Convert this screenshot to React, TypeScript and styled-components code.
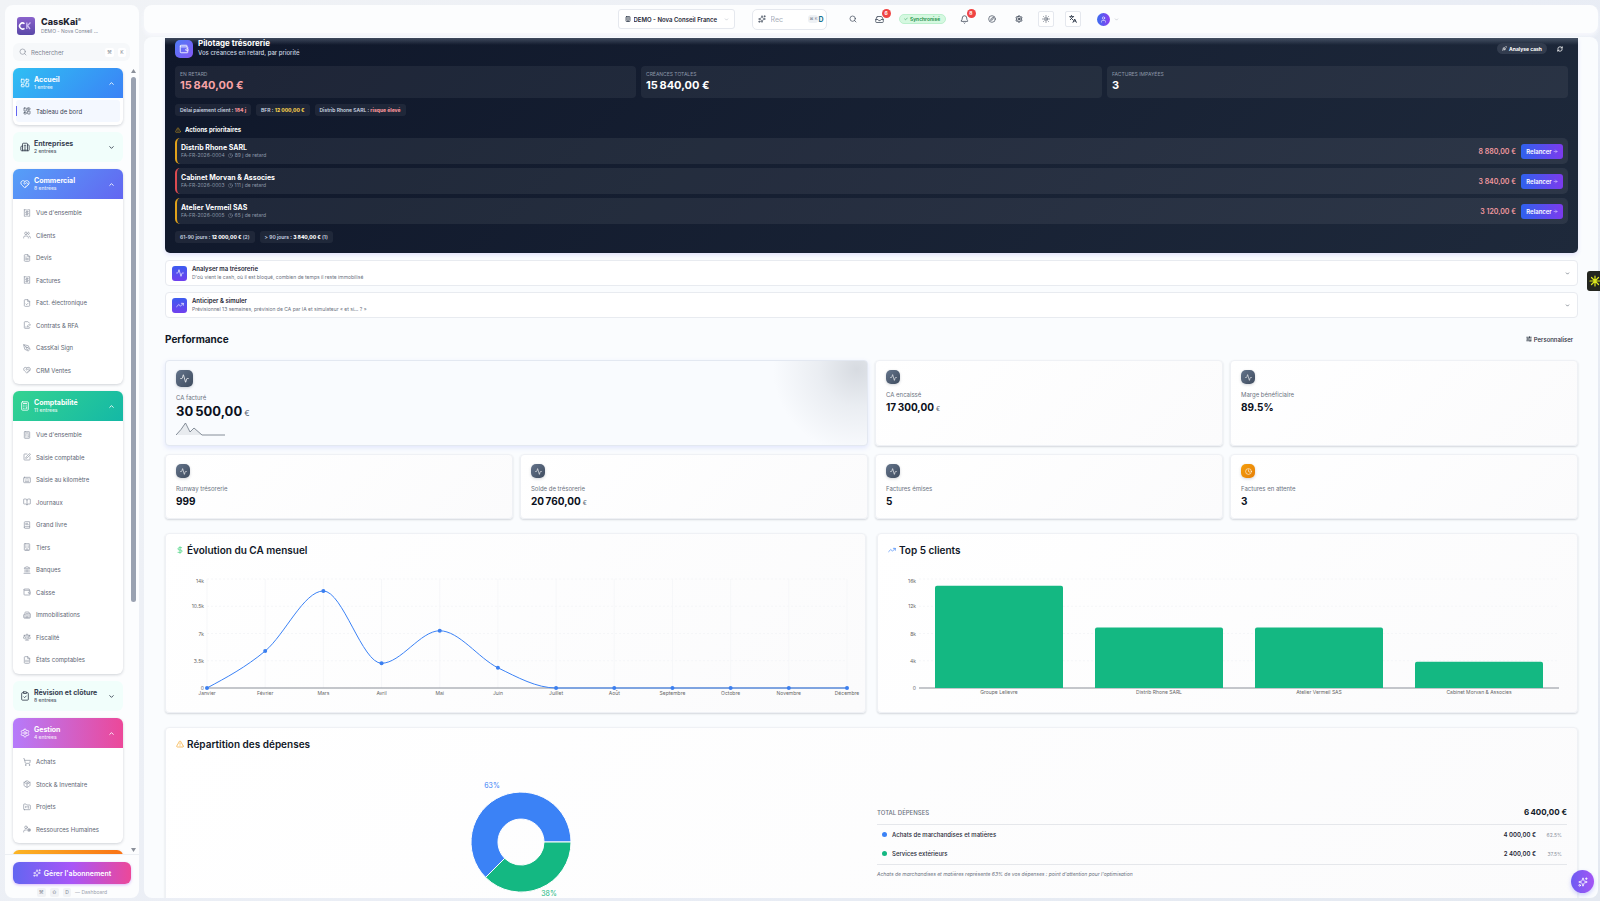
import React from "react";
import styled, { createGlobalStyle, css } from "styled-components";
import {
  Activity, ArrowRight, BookOpen, Building, Building2, Calculator, Check, ChevronDown, ChevronUp,
  ClipboardCheck, Clock, Compass, DollarSign, FileCheck, FilePenLine, FileSpreadsheet, FileText, FolderKanban,
  HeartHandshake, Inbox, Keyboard, Landmark, Languages, LayoutDashboard, Package, PenTool, Receipt, RefreshCw, Scale,
  Search, Settings, ShoppingCart, SlidersHorizontal, Sparkles, SquarePen, Sun, TrendingUp, TriangleAlert, User,
  UserCog, Users, Wallet, Bell, BookText, Rocket,
} from "lucide-react";

const heading = `Inter, "Liberation Sans", sans-serif`;

const GlobalStyle = createGlobalStyle`
  *, *::before, *::after { box-sizing: border-box; }
  body { margin: 0; background: linear-gradient(135deg, #f1f3f6, #e9edf5 60%, #e4e9f1); font-family: Inter, "Liberation Sans", sans-serif; color: #1f2937; }
  h1, h2, h3, p, ul, dl, dd { margin: 0; padding: 0; }
  ul { list-style: none; }
  button, input, select { font: inherit; color: inherit; border: 0; padding: 0; margin: 0; background: none; }
  a { color: inherit; text-decoration: none; }
  svg { display: block; flex: none; }
`;

const Shell = styled.div`
  display: grid;
  grid-template-columns: 134px minmax(0, 1fr);
  gap: 5px;
  height: 100vh;
  padding: 5px 2px 3px 5px;
  overflow: hidden;
`;

/* Sidebar */

const Sidebar = styled.aside`
  display: flex;
  flex-direction: column;
  min-height: 0;
  background: #fcfdfe;
  border-radius: 8px;
  overflow: hidden;
`;

const Brand = styled.div`
  display: flex;
  align-items: center;
  gap: 6px;
  padding: 12px 12px 0;
`;

const BrandName = styled.div`
  font: 800 9px/10px ${heading};
  color: #1f2530;
  sup { font-size: 5px; line-height: 1; vertical-align: 3px; }
`;

const BrandSub = styled.div`
  font-size: 5px;
  line-height: 8px;
  color: #7d8492;
`;

const SideSearch = styled.label`
  display: flex;
  align-items: center;
  gap: 4px;
  height: 18px;
  margin: 8px 9px 0 8px;
  padding: 0 4px 0 6px;
  border-radius: 6px;
  background: #f6f8fa;
  color: #8d939f;
  input { width: 100%; min-width: 0; font-size: 6px; outline: 0; }
  input::placeholder { color: #7d8492; opacity: 1; }
`;

const Kbd = styled.kbd`
  flex: none;
  min-width: 8px;
  padding: 0 2px;
  border-radius: 2px;
  background: #fff;
  font: 5px/9px ${heading};
  text-align: center;
  color: #7d8492;
`;

const NavArea = styled.div`
  display: flex;
  flex: 1;
  gap: 8px;
  min-height: 0;
  margin-top: 7px;
  padding: 0 3px 0 8px;
  overflow: hidden;
`;

const Nav = styled.nav`
  flex: 1;
  display: flex;
  flex-direction: column;
  gap: 7px;
  > * { flex: none; }
`;

const Scroller = styled.div`
  display: flex;
  flex-direction: column;
  align-items: center;
  width: 5px;
  padding: 1px 0 2px;
  color: #8b909a;
`;

const Thumb = styled.div`
  width: 5px;
  height: 67%;
  margin-top: 4px;
  margin-bottom: auto;
  border-radius: 3px;
  background: #9aa2b1;
`;

const Section = styled.section`
  border-radius: 6px;
  background: #fff;
  box-shadow: 0 1px 3px rgba(30, 41, 59, 0.2);
  overflow: hidden;
`;

const SectionHead = styled.button<{ $tone: string; $open: boolean }>`
  display: flex;
  align-items: center;
  gap: 4px;
  width: 100%;
  height: 30px;
  padding: 0 8px 0 7px;
  text-align: left;
  background: ${(p) => p.$tone};
  color: ${(p) => (p.$open ? "#fff" : "#374151")};
  svg:last-child { margin-left: auto; }
`;

const ClosedSection = styled.section`
  border-radius: 6px;
  overflow: hidden;
`;

const SectionTitle = styled.span`
  display: block;
  font-size: 7px;
  font-weight: 700;
  line-height: 9px;
`;

const SectionCount = styled.span`
  display: block;
  font-size: 5px;
  font-weight: 500;
  line-height: 7px;
  opacity: 0.85;
`;

const NavList = styled.ul`
  padding: 2px 3px 3px;
`;

const NavItem = styled.li`
  display: flex;
  height: 22px;
  &:nth-child(odd) { height: 23px; }
  &:only-child { height: 22px; }
`;

const NavLink = styled.a<{ $active?: boolean }>`
  display: flex;
  align-items: center;
  gap: 5px;
  width: 100%;
  padding-left: 6px;
  border-left: 1px solid transparent;
  font-size: 6px;
  color: #5d6573;
  svg { color: #8b92a0; }
  ${(p) => p.$active && css`
    background: #f4f8ff;
    color: #374151;
    border-radius: 3px;
    svg { color: #4b5563; }
    &::before { content: ""; width: 1px; height: 10px; margin-left: -7px; margin-right: 1px; background: #6366f1; }
  `}
`;

const SideFoot = styled.div`
  padding: 7px 8px 0;
  border-top: 1px solid #eceff3;
  height: 44px;
`;

const Subscribe = styled.button`
  display: flex;
  align-items: center;
  justify-content: center;
  gap: 3px;
  width: 100%;
  height: 22px;
  border-radius: 6px;
  background: linear-gradient(90deg, #6366f1, #a855f7 50%, #ec4899);
  box-shadow: 0 1px 3px rgba(168, 85, 247, 0.4);
  color: #fff;
  font-size: 7px;
  font-weight: 600;
`;

const Hint = styled.div`
  display: flex;
  justify-content: center;
  align-items: center;
  gap: 4px;
  margin-top: 4px;
  font-size: 5px;
  line-height: 9px;
  color: #9aa1ad;
  kbd { background: #f1f3f6; }
`;

/* Top bar */

const Main = styled.div`
  display: grid;
  grid-template-rows: 28px minmax(0, 1fr);
  gap: 4px;
  min-width: 0;
  min-height: 0;
`;

const TopBar = styled.header`
  display: flex;
  align-items: center;
  justify-content: center;
  gap: 11px;
  padding-right: 6px;
  border-radius: 8px;
  background: #fcfdfe;
  box-shadow: 0 3px 4px rgba(248, 250, 254, 0.9);
  color: #374151;
`;

const OrgField = styled.div`
  position: relative;
  display: flex;
  align-items: center;
  width: 117px;
  height: 20px;
  margin-right: 6px;
  border: 1px solid #e5e8ee;
  border-radius: 3px;
  background: #fff;
  svg { position: absolute; pointer-events: none; }
  svg:first-child { left: 6px; }
  svg:last-child { right: 5px; color: #9aa1ad; }
  select { width: 100%; height: 18px; padding-left: 15px; appearance: none; font-size: 6px; font-weight: 600; color: #1f2937; }
`;

const TopSearch = styled.label`
  display: flex;
  align-items: center;
  gap: 5px;
  width: 75px;
  height: 21px;
  margin-right: 7px;
  padding: 0 2px 0 5px;
  border: 1px solid #e5e8ee;
  border-radius: 5px;
  background: #fff;
  input { flex: 1; width: 20px; min-width: 0; font-size: 7px; outline: 0; }
  input::placeholder { color: #a9aeb8; opacity: 1; }
  span { padding: 0 1px 0 2px; border-radius: 3px; background: #eef1f5; font-size: 4px; line-height: 8px; color: #7d8492; }
  b { margin-left: -5px; font-size: 7px; color: #1d7290; }
`;

const IconButton = styled.button<{ $boxed?: boolean }>`
  position: relative;
  display: grid;
  place-items: center;
  width: 16px;
  height: 16px;
  border-radius: 2px;
  ${(p) => p.$boxed && "border: 1px solid #e5e8ee; background: #fff;"}
`;

const Badge = styled.span`
  position: absolute;
  top: -2px;
  right: -3px;
  width: 9px;
  height: 9px;
  border-radius: 50%;
  background: #ef4444;
  color: #fff;
  font-size: 5px;
  font-weight: 700;
  line-height: 9px;
  text-align: center;
`;

const SyncPill = styled.span`
  display: flex;
  align-items: center;
  justify-content: center;
  gap: 2px;
  width: 47px;
  height: 10px;
  border: 1px solid #bbf0cd;
  border-radius: 5px;
  background: #d5f8e0;
  color: #1b9048;
  font-size: 5px;
  font-weight: 600;
`;

const Account = styled.button`
  display: flex;
  align-items: center;
  gap: 4px;
  margin-left: 5px;
  color: #9aa1ad;
`;

const Avatar = styled.span`
  display: grid;
  place-items: center;
  width: 13px;
  height: 13px;
  border-radius: 50%;
  background: linear-gradient(90deg, #3b6df0, #8b3df0);
  color: #fff;
`;

/* Page */

const Page = styled.main`
  min-height: 0;
  padding: 1px 20px 0 21px;
  border-radius: 8px;
  background: #fafcfe;
  overflow: hidden;
`;

const Treasury = styled.section`
  padding: 1px 10px 10px;
  border-radius: 0 0 5px 5px;
  background: linear-gradient(180deg, rgba(148, 163, 184, 0.35), transparent 7px), linear-gradient(135deg, #0f172a, #1e293b);
  box-shadow: 0 2px 4px rgba(79, 70, 229, 0.14);
  color: #fff;
`;

const TreasuryHead = styled.div`
  display: flex;
  align-items: center;
  gap: 5px;
  height: 19px;
`;

const TreasuryIcon = styled.span`
  display: grid;
  place-items: center;
  width: 18px;
  height: 18px;
  border-radius: 5px;
  background: linear-gradient(135deg, #4f7cf6, #8457f5);
`;

const TreasuryTitle = styled.h1`
  font: 700 8px/9px ${heading};
`;

const TreasurySub = styled.p`
  font-size: 6px;
  font-weight: 500;
  line-height: 10px;
  color: #cbd5e1;
`;

const HeadActions = styled.div`
  display: flex;
  align-items: center;
  gap: 10px;
  margin-left: auto;
  padding-right: 5px;
`;

const CashButton = styled.button`
  display: flex;
  align-items: center;
  justify-content: center;
  gap: 2px;
  width: 50px;
  height: 11px;
  border-radius: 6px;
  background: #323c4e;
  font-size: 5px;
  font-weight: 700;
`;

const StatGrid = styled.dl`
  display: grid;
  grid-template-columns: repeat(3, minmax(0, 1fr));
  gap: 5px;
  margin-top: 8px;
`;

const Stat = styled.div<{ $tone?: string }>`
  height: 32px;
  padding: 4px 5px;
  border-radius: 4px;
  background: rgba(255, 255, 255, 0.06);
  dt { font-size: 5px; line-height: 8px; color: #8c97a8; text-transform: uppercase; }
  dd { font-size: 11px; font-weight: 700; line-height: 15px; color: ${(p) => p.$tone || "#fff"}; }
`;

const ChipRow = styled.div<{ $top: number }>`
  display: flex;
  gap: 5px;
  margin-top: ${(p) => p.$top}px;
`;

const Chip = styled.span<{ $tone?: string }>`
  padding: 0 5px;
  border-radius: 3px;
  background: rgba(255, 255, 255, 0.06);
  font-size: 5px;
  line-height: 12px;
  font-weight: 600;
  color: #cbd5e1;
  b { font-weight: 800; color: ${(p) => p.$tone || "#fff"}; }
`;

const ActionsTitle = styled.h2`
  display: flex;
  align-items: center;
  gap: 4px;
  height: 10px;
  margin: 9px 0 3px;
  font: 700 6px/10px ${heading};
  svg { color: #d9a520; }
`;

const ActionList = styled.ul`
  display: grid;
  gap: 4px;
`;

const ActionRow = styled.li<{ $tone: string }>`
  display: flex;
  align-items: center;
  gap: 5px;
  height: 26px;
  padding: 0 5px 0 4px;
  border-left: 2px solid ${(p) => p.$tone};
  border-radius: 5px;
  background: rgba(255, 255, 255, 0.065);
`;

const ActionInfo = styled.div`
  flex: 1;
  h3 { font: 700 7px/9px ${heading}; }
  p { display: flex; align-items: center; gap: 2px; font-size: 5px; line-height: 7px; color: #8c97a8; }
  p svg { margin-left: 1px; }
`;

const Amount = styled.span`
  font-size: 7px;
  font-weight: 600;
  color: #f39aa0;
`;

const RemindButton = styled.button`
  display: flex;
  align-items: center;
  justify-content: center;
  gap: 1px;
  width: 42px;
  height: 15px;
  border-radius: 3px;
  background: linear-gradient(90deg, #2f62ee, #7c3aed);
  color: #fff;
  font-size: 6px;
  font-weight: 600;
`;

const Foldout = styled.button`
  display: flex;
  align-items: center;
  gap: 5px;
  width: 100%;
  height: 26px;
  margin-top: 6px;
  padding: 0 7px 0 6px;
  border: 1px solid #e8ebf0;
  border-radius: 4px;
  background: #fff;
  text-align: left;
  &:first-of-type { margin-top: 7px; }
  > svg { margin-left: auto; color: #4b5563; }
`;

const FoldIcon = styled.span`
  display: grid;
  place-items: center;
  width: 15px;
  height: 15px;
  border-radius: 3px;
  background: linear-gradient(180deg, #3d5cf0, #7040ee);
  color: #fff;
`;

const FoldTitle = styled.span`
  display: block;
  font: 600 6px/8px ${heading};
`;

const FoldSub = styled.span`
  display: block;
  font-size: 5px;
  line-height: 8px;
  color: #6b7280;
`;

const PerfHead = styled.div`
  display: flex;
  align-items: center;
  justify-content: space-between;
  height: 14px;
  margin: 14px 0;
  h2 { font: 700 10px/14px ${heading}; color: #111827; }
  button { display: flex; align-items: center; gap: 2px; margin-right: 5px; font-size: 6px; font-weight: 500; }
`;

const KpiGrid = styled.div`
  display: grid;
  grid-template-columns: repeat(4, minmax(0, 1fr));
  grid-template-rows: 86px 65px;
  gap: 8px 7px;
`;

const card = css`
  border: 1px solid #eff1f5;
  border-radius: 4px;
  background: linear-gradient(135deg, #fff, #fbfbfc);
  box-shadow: 0 1px 2px rgba(15, 23, 42, 0.16);
`;

const KpiCard = styled.article<{ $hero?: boolean }>`
  ${card}
  padding: 9px 10px;
  ${(p) => p.$hero && css`
    grid-column: span 2;
    border-color: #e3e8f1;
    background: radial-gradient(circle 84px at calc(100% - 10px) 8px, #d7dbe1, rgba(224, 228, 234, 0.6) 45%, rgba(249, 251, 254, 0)), #f9fbfe;
    box-shadow: 0 2px 5px rgba(99, 120, 241, 0.16);
  `}
`;

const KpiIcon = styled.span<{ $hero?: boolean; $warm?: boolean }>`
  display: grid;
  place-items: center;
  width: ${(p) => (p.$hero ? 17 : 14)}px;
  height: ${(p) => (p.$hero ? 17 : 14)}px;
  border-radius: 5px;
  background: ${(p) => (p.$warm ? "linear-gradient(135deg, #f59e0b, #e57f08)" : "linear-gradient(135deg, #64748b, #3f4c5f)")};
  box-shadow: 0 1px 3px rgba(30, 41, 59, 0.2);
  color: #fff;
`;

const KpiLabel = styled.h3`
  margin-top: 7px;
  font-size: 6px;
  font-weight: 400;
  line-height: 8px;
  color: #6b7280;
`;

const KpiValue = styled.p<{ $hero?: boolean }>`
  font-size: ${(p) => (p.$hero ? 13 : 10)}px;
  font-weight: 700;
  line-height: ${(p) => (p.$hero ? 18 : 17)}px;
  color: #0b1020;
  small { margin-left: 2px; font-size: ${(p) => (p.$hero ? 8 : 6)}px; font-weight: 500; color: #6b7280; }
`;

const ChartGrid = styled.div`
  display: grid;
  grid-template-columns: repeat(2, minmax(0, 1fr));
  gap: 11px;
  margin-top: 14px;
`;

const Panel = styled.section`
  ${card}
  padding: 9px 10px;
`;

const PanelTitle = styled.h2<{ $tone: string }>`
  display: flex;
  align-items: center;
  gap: 3px;
  font: 600 10px/14px ${heading};
  color: #111827;
  svg { color: ${(p) => p.$tone}; }
`;

const Plot = styled.svg`
  width: 100%;
  height: auto;
  margin-top: 16px;
  overflow: visible;
  text { font-size: 5px; fill: #666; }
`;

const ExpensePanel = styled(Panel)`
  height: 210px;
  margin-top: 14px;
`;

const ExpenseBody = styled.div`
  display: grid;
  grid-template-columns: repeat(2, minmax(0, 1fr));
  gap: 11px;
`;

const Donut = styled.svg`
  width: 130px;
  height: 140px;
  margin: 26px auto 0;
  text { font-size: 7px; text-anchor: middle; }
`;

const Ledger = styled.div`
  margin-top: 50px;
`;

const LedgerTable = styled.table`
  width: 100%;
  border-collapse: collapse;
  font-size: 6px;
  thead th { height: 23px; padding: 0; font-weight: 500; color: #6b7280; text-align: left; }
  thead td { padding: 0; font-size: 8px; font-weight: 700; text-align: right; color: #111827; }
  tbody { border-top: 1px solid #e5e7eb; border-bottom: 1px solid #e5e7eb; }
  tbody th { padding: 0 0 0 5px; font-weight: 500; text-align: left; }
  tbody td { padding: 0; font-weight: 600; text-align: right; }
  tbody td:last-child { width: 31px; padding-right: 5px; font-size: 5px; font-weight: 400; color: #8b92a0; }
  tbody tr { height: 20px; }
  tbody tr:first-child > * { padding-top: 1px; }
`;

const Dot = styled.i<{ $tone: string }>`
  display: inline-block;
  width: 5px;
  height: 5px;
  margin-right: 5px;
  border-radius: 50%;
  background: ${(p) => p.$tone};
`;

const Note = styled.p`
  margin-top: 4px;
  font-size: 5px;
  line-height: 10px;
  font-style: italic;
  color: #6b7280;
`;

const SideTab = styled.button`
  position: fixed;
  right: 0;
  top: 271px;
  width: 13px;
  height: 20px;
  border-radius: 3px 0 0 3px;
  background: #24261f;
  overflow: hidden;
`;

const AssistButton = styled.button`
  position: fixed;
  right: 6px;
  bottom: 8px;
  display: grid;
  place-items: center;
  width: 23px;
  height: 23px;
  border-radius: 50%;
  background: linear-gradient(90deg, #6d5cf2, #a455f5);
  box-shadow: 0 2px 4px rgba(99, 102, 241, 0.3);
  color: #fff;
`;

type IconType = React.ComponentType<{ size?: number; strokeWidth?: number }>;
type Entry = [string, IconType];

const groups: { title: string; count: string; icon: IconType; tone: string; items: Entry[] }[] = [
  { title: "Accueil", count: "1 entrée", icon: LayoutDashboard, tone: "linear-gradient(135deg, #2fbff3, #3b82f6)", items: [["Tableau de bord", LayoutDashboard]] },
  { title: "Entreprises", count: "2 entrées", icon: Building2, tone: "#f1fefb", items: [] },
  {
    title: "Commercial", count: "8 entrées", icon: HeartHandshake, tone: "linear-gradient(135deg, #55a0f8, #6366f1)",
    items: [["Vue d'ensemble", Receipt], ["Clients", Users], ["Devis", FileText], ["Factures", Receipt], ["Fact. électronique", FileCheck], ["Contrats & RFA", FilePenLine], ["CassKai Sign", PenTool], ["CRM Ventes", HeartHandshake]],
  },
  {
    title: "Comptabilité", count: "11 entrées", icon: Calculator, tone: "linear-gradient(135deg, #34d391, #14b8a6)",
    items: [["Vue d'ensemble", Calculator], ["Saisie comptable", SquarePen], ["Saisie au kilomètre", Keyboard], ["Journaux", BookOpen], ["Grand livre", BookText], ["Tiers", Building], ["Banques", Landmark], ["Caisse", Wallet], ["Immobilisations", Building2], ["Fiscalité", Scale], ["États comptables", FileSpreadsheet]],
  },
  { title: "Révision et clôture", count: "8 entrées", icon: ClipboardCheck, tone: "#f1fefb", items: [] },
  {
    title: "Gestion", count: "4 entrées", icon: Settings, tone: "linear-gradient(90deg, #b57bfb, #ec4899)",
    items: [["Achats", ShoppingCart], ["Stock & Inventaire", Package], ["Projets", FolderKanban], ["Ressources Humaines", UserCog]],
  },
];

const overdue = [
  { name: "Distrib Rhone SARL", ref: "FA-FR-2026-0004", late: "89 j de retard", amount: "8 880,00 €", tone: "#e0a11b" },
  { name: "Cabinet Morvan & Associes", ref: "FA-FR-2026-0003", late: "111 j de retard", amount: "3 840,00 €", tone: "#dc4a50" },
  { name: "Atelier Vermeil SAS", ref: "FA-FR-2026-0005", late: "65 j de retard", amount: "3 120,00 €", tone: "#e0a11b" },
];

const months: [string, number][] = [
  ["Janvier", 0], ["Février", 4750], ["Mars", 12460], ["Avril", 3180], ["Mai", 7350], ["Juin", 2600],
  ["Juillet", 0], ["Août", 0], ["Septembre", 0], ["Octobre", 0], ["Novembre", 0], ["Décembre", 0],
];

const clients: [string, number][] = [
  ["Groupe Lelievre", 15000], ["Distrib Rhone SARL", 8880], ["Atelier Vermeil SAS", 8880], ["Cabinet Morvan & Associes", 3840],
];

const TOP = 6;
const BASE = 115;
const LEFT = 31;
const SPAN = 640;

/* Cubic path through the points whose curve never overshoots them. */
function smoothPath(pts: { x: number; y: number }[]) {
  const n = pts.length;
  const h = pts[1].x - pts[0].x;
  const s = pts.slice(1).map((p, i) => (p.y - pts[i].y) / h);
  const t = pts.map((_, i) => {
    if (i === 0 || i === n - 1) return 0;
    const a = s[i - 1];
    const b = s[i];
    return (Math.sign(a) + Math.sign(b)) * Math.min(Math.abs(a), Math.abs(b), Math.abs(a + b) / 4) || 0;
  });
  t[0] = (3 * s[0] - t[1]) / 2;
  return pts.slice(1).reduce((d, p, i) => {
    const q = pts[i];
    return `${d}C${q.x + h / 3},${q.y + (t[i] * h) / 3} ${p.x - h / 3},${p.y - (t[i + 1] * h) / 3} ${p.x},${p.y}`;
  }, `M${pts[0].x},${pts[0].y}`);
}

function Axis({ labels }: { labels: string[] }) {
  const step = (BASE - TOP) / 4;
  return (
    <g>
      {labels.map((label, i) => (
        <g key={label}>
          {i > 0 && <line x1={LEFT} x2={LEFT + SPAN} y1={BASE - i * step} y2={BASE - i * step} stroke="#f5f6f8" strokeDasharray="2 2" />}
          <text x={LEFT - 3} y={BASE - i * step + (i === 4 ? 4 : 2)} textAnchor="end">{label}</text>
        </g>
      ))}
      <line x1={LEFT} x2={LEFT + SPAN} y1={BASE} y2={BASE} stroke="#8a8f98" strokeWidth={1} />
    </g>
  );
}

function RevenueChart() {
  const pts = months.map(([, v], i) => ({ x: LEFT + (i * SPAN) / 11, y: BASE - (v / 14000) * (BASE - TOP) }));
  return (
    <Plot viewBox="0 0 679 130" role="img" aria-label="Évolution du CA mensuel">
      {pts.map((p, i) => <line key={i} x1={p.x} x2={p.x} y1={TOP} y2={BASE} stroke="#f6f7f9" />)}
      <Axis labels={["0", "3.5k", "7k", "10.5k", "14k"]} />
      <path d={smoothPath(pts)} fill="none" stroke="#3b82f6" strokeWidth={1} />
      {pts.map((p, i) => (
        <g key={i}>
          <circle cx={p.x} cy={p.y} r={2} fill="#3b7ff0" />
          <text x={p.x} y={BASE + 7} textAnchor="middle">{months[i][0]}</text>
        </g>
      ))}
    </Plot>
  );
}

function ClientsChart() {
  const band = SPAN / clients.length;
  return (
    <Plot viewBox="0 0 679 130" role="img" aria-label="Top 5 clients">
      <Axis labels={["0", "4k", "8k", "12k", "16k"]} />
      {clients.map(([name, v], i) => {
        const h = (v / 16000) * (BASE - TOP);
        const x = LEFT + i * band + band / 10;
        const w = band * 0.8;
        const y = BASE - h;
        return (
          <g key={name}>
            <path d={`M${x},${BASE}V${y + 2}q0,-2 2,-2H${x + w - 2}q2,0 2,2V${BASE}Z`} fill="#14b882" />
            <text x={x + w / 2} y={BASE + 6} textAnchor="middle">{name}</text>
          </g>
        );
      })}
    </Plot>
  );
}

function Kpi({ label, value, unit, hero, warm }: { label: string; value: string; unit?: string; hero?: boolean; warm?: boolean }) {
  const Icon = warm ? Clock : Activity;
  return (
    <KpiCard $hero={hero}>
      <KpiIcon $hero={hero} $warm={warm}><Icon size={hero ? 9 : 7} strokeWidth={2} /></KpiIcon>
      <KpiLabel>{label}</KpiLabel>
      <KpiValue $hero={hero}>{value}{unit && <small>{unit}</small>}</KpiValue>
      {hero && (
        <svg width="50" height="14" viewBox="0 0 50 14" aria-hidden="true">
          <path d="M0 13 5 7 9 1 14 10 18 6 26 13Z" fill="#e8ebef" />
          <path d="M0 13 5 7.500 9.500 1 14 10 18 6 26 13H49" fill="none" stroke="#6b7582" strokeWidth="0.8" />
        </svg>
      )}
    </KpiCard>
  );
}

export default function App() {
  return (
    <>
      <GlobalStyle />
      <Shell>
        <Sidebar>
          <Brand>
            <svg width="18" height="18" viewBox="0 0 18 18" aria-hidden="true">
              <defs>
                <linearGradient id="brand" x1="0" y1="0" x2="0" y2="1">
                  <stop offset="0" stopColor="#8a63cc" />
                  <stop offset="1" stopColor="#5a48a8" />
                </linearGradient>
              </defs>
              <rect width="18" height="18" rx="3" fill="url(#brand)" />
              <path d="M7.500 6.700A3 3 0 1 0 7.500 11.300" fill="none" stroke="#fff" strokeWidth="1.500" />
              <path d="M9.800 5.500V12M13.500 5.500L10.500 8.500L13 12" fill="none" stroke="#cdbdf2" strokeWidth="1.300" />
            </svg>
            <div>
              <BrandName>CassKai<sup>®</sup></BrandName>
              <BrandSub>DEMO - Nova Conseil ...</BrandSub>
            </div>
          </Brand>
          <SideSearch>
            <Search size={8} strokeWidth={2} />
            <input type="text" placeholder="Rechercher" aria-label="Rechercher" />
            <Kbd>⌘</Kbd>
            <Kbd>K</Kbd>
          </SideSearch>
          <NavArea>
            <Nav>
              {groups.map((g) => {
                const open = g.items.length > 0;
                const Box = open ? Section : ClosedSection;
                const Chevron = open ? ChevronUp : ChevronDown;
                return (
                  <Box key={g.title}>
                    <SectionHead $tone={g.tone} $open={open} aria-expanded={open}>
                      <g.icon size={10} strokeWidth={2} />
                      <span>
                        <SectionTitle>{g.title}</SectionTitle>
                        <SectionCount>{g.count}</SectionCount>
                      </span>
                      <Chevron size={7} strokeWidth={3} />
                    </SectionHead>
                    {open && (
                      <NavList>
                        {g.items.map(([label, Icon]) => (
                          <NavItem key={label}>
                            <NavLink href="#" $active={label === "Tableau de bord"}>
                              <Icon size={8} strokeWidth={2} />
                              {label}
                            </NavLink>
                          </NavItem>
                        ))}
                      </NavList>
                    )}
                  </Box>
                );
              })}
              <Section>
                <SectionHead $tone="linear-gradient(90deg, #fbb524, #f97316)" $open aria-label="Section suivante" />
              </Section>
            </Nav>
            <Scroller aria-hidden="true">
              <svg width="5" height="4" viewBox="0 0 5 4"><path d="M2.500 0 5 4H0Z" fill="currentColor" /></svg>
              <Thumb />
              <svg width="5" height="4" viewBox="0 0 5 4"><path d="M2.500 4 5 0H0Z" fill="currentColor" /></svg>
            </Scroller>
          </NavArea>
          <SideFoot>
            <Subscribe><Sparkles size={8} />Gérer l'abonnement</Subscribe>
            <Hint><Kbd>⌘</Kbd><Kbd>⇧</Kbd><Kbd>D</Kbd><span>— Dashboard</span></Hint>
          </SideFoot>
        </Sidebar>

        <Main>
          <TopBar>
            <OrgField>
              <Building size={6} strokeWidth={3} />
              <select aria-label="Entreprise"><option>DEMO - Nova Conseil France</option></select>
              <ChevronDown size={5} />
            </OrgField>
            <TopSearch>
              <Sparkles size={8} />
              <input type="text" placeholder="Rec" aria-label="Recherche" />
              <span>⌘ K</span>
              <b>D</b>
            </TopSearch>
            <IconButton aria-label="Chercher"><Search size={8} /></IconButton>
            <IconButton aria-label="Boîte de réception"><Inbox size={9} /><Badge>6</Badge></IconButton>
            <SyncPill><Check size={4} strokeWidth={3} />Synchronisé</SyncPill>
            <IconButton aria-label="Notifications"><Bell size={9} /><Badge>8</Badge></IconButton>
            <IconButton aria-label="Explorer"><Compass size={8} /></IconButton>
            <IconButton aria-label="Paramètres"><Settings size={8} strokeWidth={3} /></IconButton>
            <IconButton $boxed aria-label="Thème"><Sun size={8} /></IconButton>
            <IconButton $boxed aria-label="Langue"><Languages size={8} strokeWidth={3} /></IconButton>
            <Account aria-label="Compte"><Avatar><User size={7} /></Avatar><ChevronDown size={5} /></Account>
          </TopBar>

          <Page>
            <Treasury>
              <TreasuryHead>
                <TreasuryIcon><Wallet size={10} /></TreasuryIcon>
                <div>
                  <TreasuryTitle>Pilotage trésorerie</TreasuryTitle>
                  <TreasurySub>Vos créances en retard, par priorité</TreasurySub>
                </div>
                <HeadActions>
                  <CashButton><Rocket size={5} />Analyse cash</CashButton>
                  <button aria-label="Actualiser"><RefreshCw size={6} strokeWidth={3} /></button>
                </HeadActions>
              </TreasuryHead>
              <StatGrid>
                <Stat $tone="#f8a3a6"><dt>En retard</dt><dd>{"15\u202f840,00 €"}</dd></Stat>
                <Stat><dt>Créances totales</dt><dd>{"15\u202f840,00 €"}</dd></Stat>
                <Stat><dt>Factures impayées</dt><dd>3</dd></Stat>
              </StatGrid>
              <ChipRow $top={6}>
                <Chip $tone="#f08f95">Délai paiement client : <b>184 j</b></Chip>
                <Chip $tone="#f2cb4b">BFR : <b>12 000,00 €</b></Chip>
                <Chip $tone="#f08f95">Distrib Rhone SARL : <b>risque élevé</b></Chip>
              </ChipRow>
              <ActionsTitle><TriangleAlert size={6} />Actions prioritaires</ActionsTitle>
              <ActionList>
                {overdue.map((o) => (
                  <ActionRow key={o.ref} $tone={o.tone}>
                    <ActionInfo>
                      <h3>{o.name}</h3>
                      <p>{o.ref} <Clock size={5} /> {o.late}</p>
                    </ActionInfo>
                    <Amount>{o.amount}</Amount>
                    <RemindButton>Relancer <ArrowRight size={5} /></RemindButton>
                  </ActionRow>
                ))}
              </ActionList>
              <ChipRow $top={7}>
                <Chip>61-90 jours : <b>12 000,00 €</b> (2)</Chip>
                <Chip>&gt; 90 jours : <b>3 840,00 €</b> (1)</Chip>
              </ChipRow>
            </Treasury>

            <Foldout aria-expanded={false}>
              <FoldIcon><Activity size={8} /></FoldIcon>
              <span>
                <FoldTitle>Analyser ma trésorerie</FoldTitle>
                <FoldSub>D'où vient le cash, où il est bloqué, combien de temps il reste immobilisé</FoldSub>
              </span>
              <ChevronDown size={5} strokeWidth={3} />
            </Foldout>
            <Foldout aria-expanded={false}>
              <FoldIcon><TrendingUp size={8} /></FoldIcon>
              <span>
                <FoldTitle>Anticiper &amp; simuler</FoldTitle>
                <FoldSub>Prévisionnel 13 semaines, prévision de CA par IA et simulateur « et si… ? »</FoldSub>
              </span>
              <ChevronDown size={5} strokeWidth={3} />
            </Foldout>

            <PerfHead>
              <h2>Performance</h2>
              <button><SlidersHorizontal size={6} strokeWidth={3} />Personnaliser</button>
            </PerfHead>

            <KpiGrid>
              <Kpi hero label="CA facturé" value={"30\u202f500,00"} unit="€" />
              <Kpi label="CA encaissé" value={"17\u202f300,00"} unit="€" />
              <Kpi label="Marge bénéficiaire" value="89.5%" />
              <Kpi label="Runway trésorerie" value="999" />
              <Kpi label="Solde de trésorerie" value={"20\u202f760,00"} unit="€" />
              <Kpi label="Factures émises" value="5" />
              <Kpi warm label="Factures en attente" value="3" />
            </KpiGrid>

            <ChartGrid>
              <Panel>
                <PanelTitle $tone="#35cf72"><DollarSign size={8} />Évolution du CA mensuel</PanelTitle>
                <RevenueChart />
              </Panel>
              <Panel>
                <PanelTitle $tone="#3b82f6"><TrendingUp size={8} />Top 5 clients</PanelTitle>
                <ClientsChart />
              </Panel>
            </ChartGrid>

            <ExpensePanel>
              <PanelTitle $tone="#f5a524"><TriangleAlert size={8} />Répartition des dépenses</PanelTitle>
              <ExpenseBody>
                <Donut viewBox="0 0 130 140" role="img" aria-label="Répartition des dépenses">
                  <path d="M115 65A50 50 0 1 0 29.600 100.400L48.700 81.300A23 23 0 1 1 88 65Z" fill="#3b82f6" stroke="#fff" />
                  <path d="M29.600 100.400A50 50 0 0 0 115 65H88A23 23 0 0 1 48.700 81.300Z" fill="#14b882" stroke="#fff" />
                  <text x="36" y="11" fill="#3b82f6">63%</text>
                  <text x="93" y="119" fill="#14b882">38%</text>
                </Donut>
                <Ledger>
                  <LedgerTable>
                    <thead>
                      <tr><th scope="col">TOTAL DÉPENSES</th><td colSpan={2}>{"6\u202f400,00 €"}</td></tr>
                    </thead>
                    <tbody>
                      <tr><th scope="row"><Dot $tone="#3b82f6" />Achats de marchandises et matières</th><td>4 000,00 €</td><td>62.5%</td></tr>
                      <tr><th scope="row"><Dot $tone="#14b882" />Services extérieurs</th><td>2 400,00 €</td><td>37.5%</td></tr>
                    </tbody>
                  </LedgerTable>
                  <Note>Achats de marchandises et matières représente 63% de vos dépenses : point d'attention pour l'optimisation</Note>
                </Ledger>
              </ExpenseBody>
            </ExpensePanel>
          </Page>
        </Main>
      </Shell>
      <SideTab aria-label="Extension">
        <svg width="13" height="20" viewBox="0 0 13 20">
          <path d="M8 5V15M3 10H13M4.500 6.500L11.500 13.500M11.500 6.500L4.500 13.500" stroke="#dbe51c" strokeWidth="1.200" strokeLinecap="round" />
        </svg>
      </SideTab>
      <AssistButton aria-label="Assistant"><Sparkles size={10} /></AssistButton>
    </>
  );
}
